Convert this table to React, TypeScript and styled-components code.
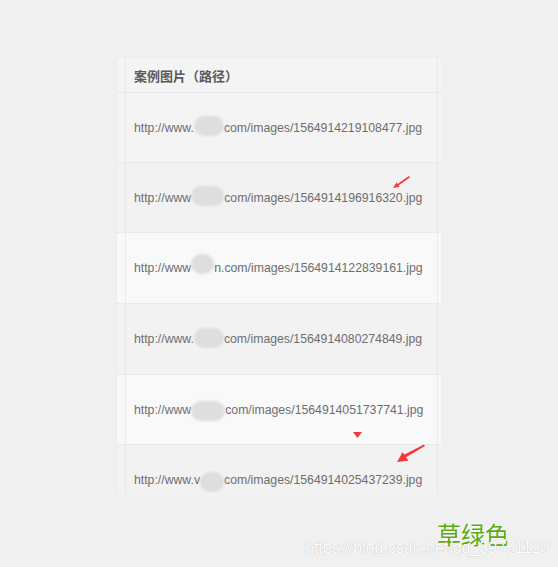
import React from 'react';
import styled, { createGlobalStyle } from 'styled-components';

const Global = createGlobalStyle`
  html, body { margin: 0; padding: 0; background: #f0f0f0; }
  body { font-family: "Liberation Sans", Arial, "Noto Sans CJK SC", sans-serif; }
`;

const Page = styled.div`
  position: relative;
  width: 558px;
  height: 567px;
  overflow: hidden;
  display: flex;
  flex-direction: column;
  padding-top: 57px;
  box-sizing: border-box;
`;

const Table = styled.div`
  margin-left: 116px;
  width: 325px;
  height: 438px;
  overflow: hidden;
  display: flex;
  flex-direction: column;
  border-left: 1px solid #eaecee;
  border-top: 1px solid #eaecee;
  box-sizing: border-box;
`;

const Row = styled.div<{ $bg: string; $h: number }>`
  display: grid;
  grid-template-columns: 9px 1fr 4px;
  flex: 0 0 auto;
  height: ${(p) => p.$h}px;
  background: ${(p) => p.$bg};
  border-bottom: 1px solid #e7eaed;
  box-sizing: border-box;
`;

const Gutter = styled.div`
  border-right: 1px solid #e7eaed;
`;

const EndGutter = styled.div`
  border-left: 1px solid #e7eaed;
`;

const HeadCell = styled.div`
  display: flex;
  align-items: center;
  padding-left: 8px;
  font-family: "Liberation Sans", "Noto Sans CJK SC", sans-serif;
  font-weight: bold;
  font-size: 13px;
  color: #5a5a5a;
`;

const Cell = styled.div`
  display: flex;
  align-items: center;
  padding-left: 8px;
  font-size: 12.25px;
  color: #6e6e6e;
  white-space: nowrap;
`;

const Blob = styled.span<{ $w: number; $dy: number }>`
  display: inline-block;
  width: ${(p) => p.$w}px;
  height: 20px;
  border-radius: 10px;
  background: #dedede;
  filter: blur(1px);
  transform: translateY(${(p) => p.$dy}px);
`;

const Footer = styled.div`
  position: relative;
  flex: 1;
`;

const GreenLabel = styled.div`
  margin-top: 26px;
  margin-left: 437px;
  font-family: "Noto Sans CJK SC", sans-serif;
  font-size: 24px;
  line-height: 26px;
  color: #5aab14;
  text-shadow: 0 0 2px #fff, 0 0 2px #fff;
`;

const Watermark = styled.div`
  position: absolute;
  left: 305px;
  top: 44px;
  font-family: "Liberation Sans", Arial, sans-serif;
  font-size: 16px;
  line-height: 18px;
  color: #ffffff;
  text-shadow: 0 0 1px rgba(0, 0, 0, 0.3);
`;

const Overlay = styled.svg`
  position: absolute;
  left: 0;
  top: 0;
  pointer-events: none;
`;

const rows = [
  { pre: 'http://www.', w: 30, dy: -2, post: 'com/images/1564914219108477.jpg', bg: '#f4f4f4' },
  { pre: 'http://www', w: 33, dy: -2, post: 'com/images/1564914196916320.jpg', bg: '#f2f2f2' },
  { pre: 'http://www', w: 23, dy: -4, post: 'n.com/images/1564914122839161.jpg', bg: '#f9f9f9' },
  { pre: 'http://www.', w: 30, dy: -1, post: 'com/images/1564914080274849.jpg', bg: '#f2f2f2' },
  { pre: 'http://www', w: 34, dy: 1, post: 'com/images/1564914051737741.jpg', bg: '#f9f9f9' },
  { pre: 'http://www.v', w: 24, dy: 2, post: 'com/images/1564914025437239.jpg', bg: '#f2f2f2' },
];

const heights = [70, 70, 71, 71, 70, 70];

export default function App() {
  return (
    <>
      <Global />
      <Page>
        <Table>
          <Row $bg="#f4f4f4" $h={35}>
            <Gutter />
            <HeadCell>案例图片（路径）</HeadCell>
            <EndGutter />
          </Row>
          {rows.map((r, i) => (
            <Row key={i} $bg={r.bg} $h={heights[i]}>
              <Gutter />
              <Cell>
                {r.pre}
                <Blob $w={r.w} $dy={r.dy} />
                {r.post}
              </Cell>
              <EndGutter />
            </Row>
          ))}
        </Table>
        <Footer>
          <GreenLabel>草绿色</GreenLabel>
          <Watermark>https://blog.csdn.net/qq_39751120</Watermark>
        </Footer>
        <Overlay width="558" height="567" viewBox="0 0 558 567">
          <line x1="409" y1="177" x2="397" y2="185.5" stroke="#f23a3a" strokeWidth="1.6" strokeLinecap="round" />
          <polygon points="393,188 399.5,186.8 396.5,182.4" fill="#f23a3a" />
          <polygon points="424,444.5 425,446 404,458.5 402.5,455.5" fill="#f23a3a" />
          <polygon points="397,462 408.5,460.8 402.6,452" fill="#f23a3a" />
          <polygon points="353,432 362,432 357.5,438" fill="#f23a3a" />
        </Overlay>
      </Page>
    </>
  );
}
